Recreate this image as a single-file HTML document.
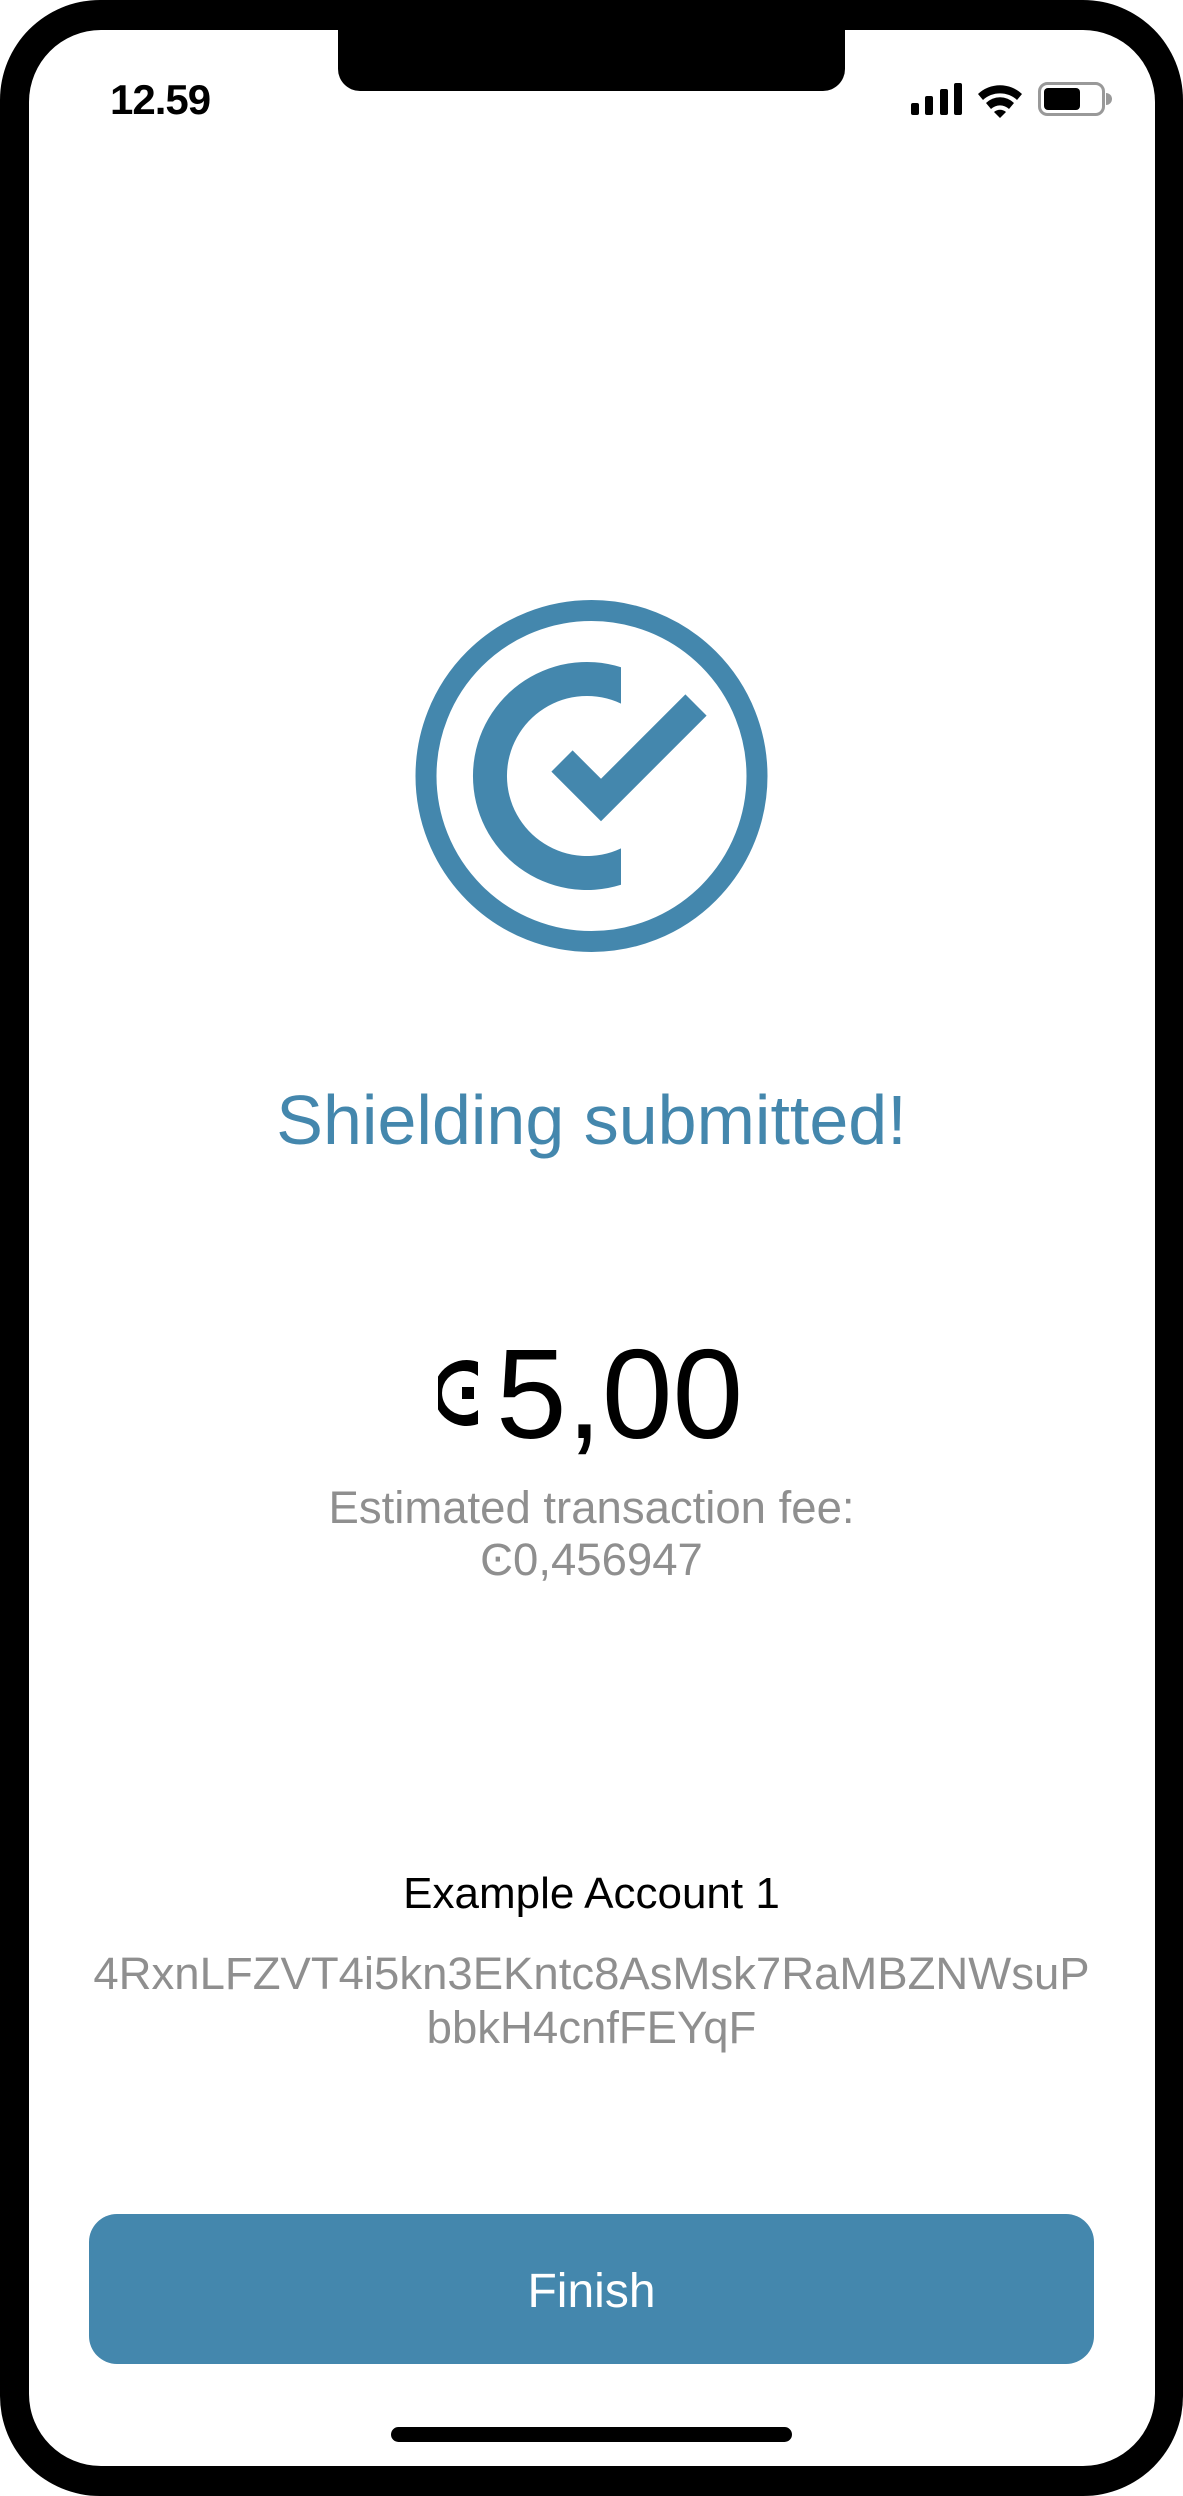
<!DOCTYPE html>
<html><head><meta charset="utf-8"><style>
html,body{margin:0;padding:0;width:1183px;height:2496px;overflow:hidden;background:#fff}
body{position:relative;font-family:"Liberation Sans",sans-serif}
.frame{position:absolute;left:0;top:0;width:1183px;height:2496px;background:#000;border-radius:100px}
.screen{position:absolute;left:29px;top:30px;width:1126px;height:2436px;background:#fff;border-radius:72px;overflow:hidden}
.notch{position:absolute;left:338px;top:0;width:507px;height:91px;background:#000;border-radius:0 0 22px 22px}
.t{position:absolute;left:0;width:1183px;text-align:center;white-space:nowrap}
</style></head><body>
<div class="frame"></div>
<div class="screen"></div>
<div class="notch"></div>
<div style="position:absolute;left:110px;top:76px;font-size:42px;font-weight:bold;line-height:48px;letter-spacing:-1px">12.59</div>
<svg style="position:absolute;left:0;top:0" width="1183" height="200">
<rect x="911" y="103" width="8" height="12" rx="2"/>
<rect x="925" y="96" width="8" height="19" rx="2"/>
<rect x="940" y="89" width="8" height="26" rx="2"/>
<rect x="954" y="83" width="8" height="32" rx="2"/>
<path d="M978,94 A32,32 0 0,1 1022,94 L1017,100 A25,25 0 0,0 983,100 Z"/>
<path d="M986,103 A20,20 0 0,1 1014,103 L1009,109 A13,13 0 0,0 991,109 Z"/>
<path d="M994,112 A9,9 0 0,1 1006,112 L1000,118 Z"/>
<rect x="1039.5" y="83.5" width="64" height="31" rx="8" fill="none" stroke="#999" stroke-width="3"/>
<rect x="1044" y="88" width="36" height="22" rx="4"/>
<path d="M1106,93 A6,6 0 0,1 1106,105 Z" fill="#999"/>
</svg>
<svg style="position:absolute;left:0;top:0" width="1183" height="1000">
<circle cx="591.5" cy="776" r="165.5" fill="none" stroke="#4487ad" stroke-width="21"/>
<path d="M621,667.2 A114,114 0 1,0 621,884.8 L621,848.4 A80,80 0 1,1 621,703.6 Z" fill="#4487ad"/>
<path d="M562,761 L601,800 L696,705" fill="none" stroke="#4487ad" stroke-width="30" stroke-linejoin="miter"/>
</svg>
<div class="t" style="top:1080px;font-size:70px;line-height:80px;color:#4487ad">Shielding submitted!</div>
<svg style="position:absolute;left:438px;top:1358px" width="46" height="74">
<path d="M40,4 A33,33 0 1,0 40,66 L40,52 A22,22 0 1,1 40,18 Z" fill="#000"/>
<rect x="24" y="29" width="12" height="12" fill="#000"/>
</svg>
<div style="position:absolute;left:496px;top:1326px;font-size:127px;line-height:136px;color:#000">5,00</div>
<div class="t" style="top:1482px;font-size:45.5px;line-height:52px;color:#8f8f8f">Estimated transaction fee:<br>Ͼ0,456947</div>
<div class="t" style="top:1868px;font-size:44px;line-height:52px;color:#000">Example Account 1</div>
<div class="t" style="top:1947px;font-size:45.5px;line-height:54px;color:#8f8f8f">4RxnLFZVT4i5kn3EKntc8AsMsk7RaMBZNWsuP<br>bbkH4cnfFEYqF</div>
<div style="position:absolute;left:89px;top:2214px;width:1005px;height:150px;background:#4487ad;border-radius:28px;color:#fff;font-size:48px;line-height:156px;text-align:center">Finish</div>
<div style="position:absolute;left:391px;top:2427px;width:401px;height:15px;background:#000;border-radius:8px"></div>
</body></html>
